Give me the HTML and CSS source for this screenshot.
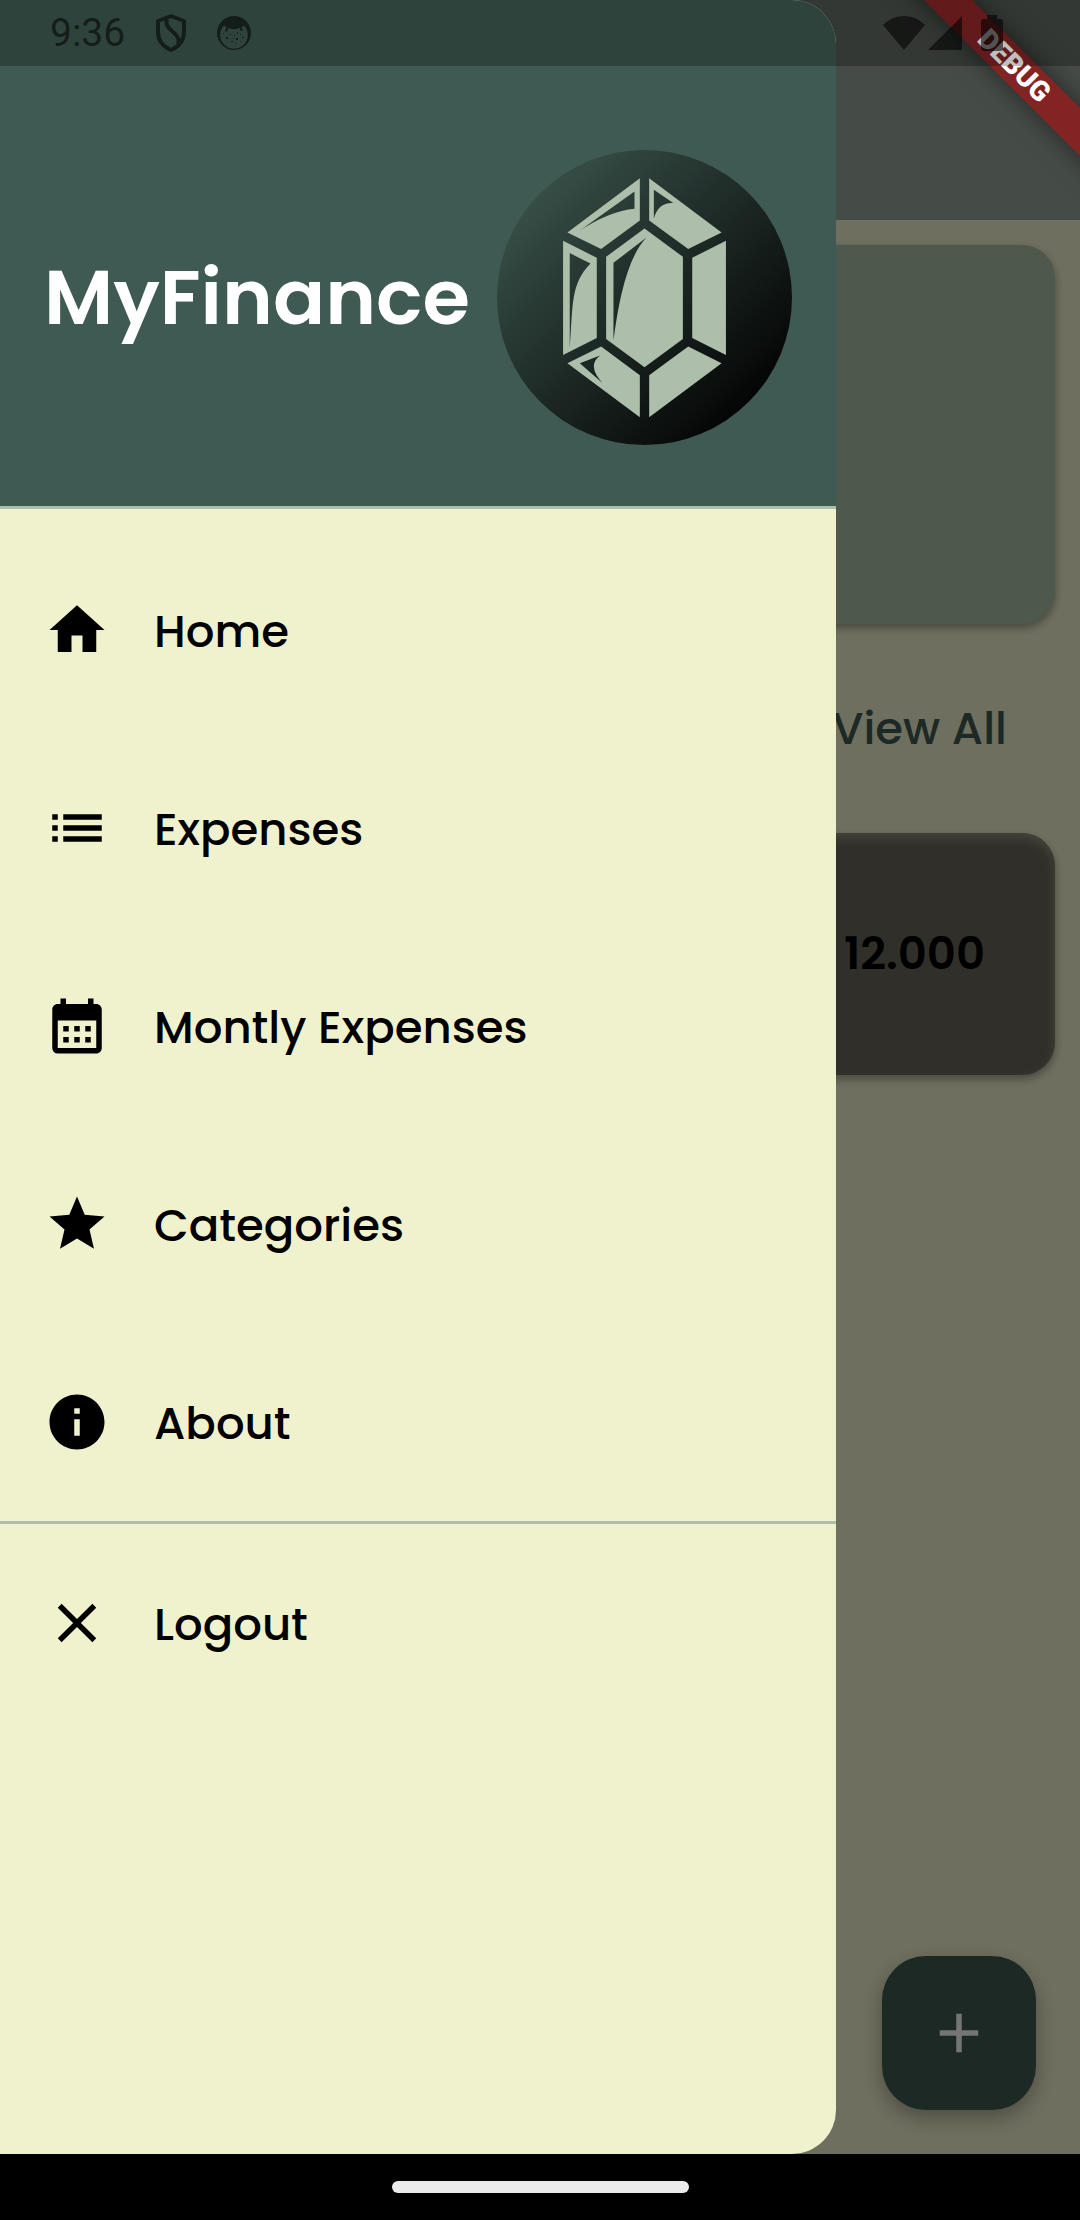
FILE: index.html
```html
<!DOCTYPE html>
<html lang="en">
<head>
<meta charset="utf-8">
<meta name="viewport" content="width=device-width, initial-scale=1">
<title>MyFinance</title>
<link rel="stylesheet" href="styles.css">
</head>
<body>
<div class="device">
  <div class="app">
    <div class="page">
      <header class="app-bar"></header>
      <main class="content">
        <section class="card card-summary"></section>
        <div class="section-head"><a class="view-all" href="#expenses">View All</a></div>
        <section class="card card-expense"><span class="amount">12.000</span></section>
      </main>
      <button class="fab" type="button" aria-label="Add expense">
        <svg class="icon" viewBox="0 0 24 24"><path d="M19 13h-6v6h-2v-6H5v-2h6V5h2v6h6z"/></svg>
      </button>
    </div>
    <div class="scrim"></div>

    <aside class="drawer">
      <header class="drawer-head">
        <h1 class="brand">MyFinance</h1>
        <svg class="logo" viewBox="52 58 884 884" aria-hidden="true">
          <defs>
            <linearGradient id="orb" x1="0.1" y1="0.1" x2="0.86" y2="0.86">
              <stop offset="0" stop-color="#3a534b"/>
              <stop offset="0.3" stop-color="#293a35"/>
              <stop offset="1" stop-color="#040505"/>
            </linearGradient>
          </defs>
          <circle cx="494" cy="500" r="442" fill="url(#orb)"/>
          <g fill="#adbfaa" fill-rule="evenodd">
            <path d="M480 143V269L364 355L263 305ZM464 182L296 302Q390 240 464 234Z"/>
            <path d="M508 143L725 305L625 355L508 269ZM522 177V263Q536 214 580 217Z"/>
            <path d="M250 330L351 381V621L250 672ZM270 367V652C280 520 272 460 332 398Z"/>
            <path d="M494 293L609 378V624L494 709L379 624V378ZM499 321L401 396V628C418 500 444 380 499 321Z"/>
            <path d="M738 330V672L637 621V381Z"/>
            <path d="M364 647L480 733V859L263 697ZM361 674L300 697L368 756Q320 704 361 674Z"/>
            <path d="M625 647L725 697L508 859V733Z"/>
          </g>
        </svg>
      </header>
      <nav class="menu" aria-label="Main">
        <a class="menu-item" href="#home">
          <svg class="icon" viewBox="0 0 24 24"><path d="M10 20v-6h4v6h5v-8h3L12 3 2 12h3v8z"/></svg>
          <span class="menu-label">Home</span>
        </a>
        <a class="menu-item" href="#expenses">
          <svg class="icon" viewBox="0 0 24 24"><path d="M3 13h2v-2H3v2zm0 4h2v-2H3v2zm0-8h2V7H3v2zm4 4h14v-2H7v2zm0 4h14v-2H7v2zM7 7v2h14V7H7z"/></svg>
          <span class="menu-label">Expenses</span>
        </a>
        <a class="menu-item" href="#monthly">
          <svg class="icon" viewBox="0 0 24 24"><path fill-rule="evenodd" d="M19 4h-1V2h-2v2H8V2H6v2H5c-1.110 0-1.990.9-1.990 2L3 20a2 2 0 0 0 2 2h14c1.100 0 2-.9 2-2V6c0-1.100-.9-2-2-2zm0 16H5V10h14v10zM9 14H7v-2h2v2zm4 0h-2v-2h2v2zm4 0h-2v-2h2v2zm-8 4H7v-2h2v2zm4 0h-2v-2h2v2zm4 0h-2v-2h2v2z"/></svg>
          <span class="menu-label">Montly Expenses</span>
        </a>
        <a class="menu-item" href="#categories">
          <svg class="icon" viewBox="0 0 24 24"><path d="M12 17.270L18.180 21l-1.640-7.030L22 9.240l-7.190-.61L12 2 9.190 8.630 2 9.240l5.460 4.730L5.820 21z"/></svg>
          <span class="menu-label">Categories</span>
        </a>
        <a class="menu-item" href="#about">
          <svg class="icon" viewBox="0 0 24 24"><path fill-rule="evenodd" d="M12 2C6.480 2 2 6.480 2 12s4.480 10 10 10 10-4.480 10-10S17.520 2 12 2zm1 15h-2v-6h2v6zm0-8h-2V7h2v2z"/></svg>
          <span class="menu-label">About</span>
        </a>
      </nav>
      <div class="menu-footer">
        <a class="menu-item" href="#logout">
          <svg class="icon" viewBox="0 0 24 24"><path d="M19 6.410L17.590 5 12 10.590 6.410 5 5 6.410 10.590 12 5 17.590 6.410 19 12 13.410 17.590 19 19 17.590 13.410 12z"/></svg>
          <span class="menu-label">Logout</span>
        </a>
      </div>
    </aside>

    <div class="banner-corner"><span class="banner">DEBUG</span></div>

    <div class="status-bar">
      <div class="status-left">
        <span>9:36</span>
        <svg class="shield" viewBox="0 0 30 38"><path fill="none" stroke="currentColor" stroke-width="4" stroke-linejoin="round" d="M15 2L28 7V18C28 27 22 33 15 36C8 33 2 27 2 18V7ZM11 5C7 17 26 18 22 30"/></svg>
        <svg class="cookie" viewBox="0 0 34 34">
          <path fill="currentColor" fill-rule="evenodd" d="M17 0a17 17 0 1 1 0 34a17 17 0 1 1 0-34zM7 9.500A13.800 13.800 0 1 0 27 9.500L24.500 11.500L26 15L24 15L22.500 12Q17 14.500 11.500 12L10 16L8 15L9.500 11.500Z"/>
          <path fill="currentColor" d="M6 17h1v1H6zM9 21h2v2H9zM13 18h1v1h-1zM17 19h1v1h-1zM20 16h1v2h-1zM19 22h2v2h-2zM23 18h1v1h-1zM25 21h2v1h-2zM14 25h2v1h-2zM18 27h1v1h-1zM16 22h1v1h-1zM23 25h1v1h-1z"/>
        </svg>
      </div>
      <div class="status-right">
        <svg class="wifi" viewBox="0 0 42 34"><path fill="currentColor" d="M21 34L0 9Q9 0 21 0T42 9Z"/></svg>
        <svg class="signal" viewBox="0 0 34 34"><path fill="currentColor" d="M34 0V34H0Z"/></svg>
        <svg class="battery" viewBox="0 0 22 36"><path fill="currentColor" d="M6 0h10v4h3a3 3 0 0 1 3 3v26a3 3 0 0 1-3 3H3a3 3 0 0 1-3-3V7a3 3 0 0 1 3-3h3z"/></svg>
      </div>
    </div>
  </div>
  <footer class="gesture-bar"><div class="gesture-pill"></div></footer>
</div>
</body>
</html>
```

FILE: styles.css
```css
:root {
  --cream: #f0f2ce;
  --forest: #3f5a52;
  --sage: #adbfaa;
}

* {
  box-sizing: border-box;
}

body {
  margin: 0;
  background: #000;
  color: #000;
  font: 500 45px/68px Poppins, Inter, "Noto Sans", sans-serif;
}

a {
  color: inherit;
  text-decoration: none;
}

svg {
  display: block;
  flex: none;
}

.device {
  display: flex;
  flex-direction: column;
  min-height: 100vh;
}

.app {
  position: relative;
  display: flex;
  flex: 1;
  overflow: hidden;
}

/* Home page behind the drawer */
.page {
  flex: 1;
  background: var(--cream);
}

.app-bar {
  height: 220px;
  background: #96a39a;
}

.content {
  padding: 25px;
}

.card {
  border-radius: 33px;
  box-shadow: 0 4px 8px rgba(0, 0, 0, 0.35);
}

.card-summary {
  min-height: 379px;
  background: #abbfa9;
}

.section-head {
  display: flex;
  justify-content: flex-end;
  align-items: center;
  height: 209px;
  padding-right: 48px;
}

.view-all {
  color: var(--forest);
}

.card-expense {
  display: flex;
  justify-content: flex-end;
  align-items: center;
  min-height: 242px;
  padding-right: 70px;
  background: #6a685b;
  box-shadow: 0 4px 8px rgba(0, 0, 0, 0.35), inset 0 5px 10px #96957e;
}

.amount {
  font-weight: 600;
}

.icon {
  width: 66px;
  height: 66px;
  fill: currentColor;
}

.fab {
  position: absolute;
  right: 44px;
  bottom: 44px;
  display: grid;
  place-items: center;
  width: 154px;
  height: 154px;
  padding: 0;
  border: 0;
  border-radius: 44px;
  background: var(--forest);
  color: #fff;
  box-shadow: 0 8px 20px rgba(0, 0, 0, 0.3);
}

.scrim {
  position: absolute;
  inset: 0;
  background: rgba(0, 0, 0, 0.54);
}

/* Navigation drawer */
.drawer {
  position: absolute;
  inset: 0 auto 0 0;
  width: 836px;
  max-width: 86%;
  overflow: hidden;
  border-radius: 0 44px 44px 0;
  background: var(--cream);
}

.drawer-head {
  display: flex;
  justify-content: space-between;
  align-items: center;
  height: 509px;
  padding: 110px 44px 22px;
  border-bottom: 3px solid var(--sage);
  background: var(--forest);
}

.brand {
  margin: 0;
  color: #fff;
  font-size: 77px;
  font-weight: 600;
  line-height: 116px;
}

.logo {
  width: 295px;
  height: 295px;
}

.menu {
  padding-top: 22px;
}

.menu-item {
  display: flex;
  align-items: center;
  gap: 44px;
  height: 198px;
  padding: 0 44px;
}

.menu-label {
  padding-top: 4px;
}

.menu-footer {
  border-top: 3px solid var(--sage);
}

/* Debug ribbon */
.banner-corner {
  position: absolute;
  top: 0;
  right: 0;
  width: 220px;
  height: 220px;
  overflow: hidden;
}

.banner {
  position: absolute;
  top: 49px;
  right: -100px;
  width: 332px;
  transform: rotate(45deg);
  background: #842323;
  color: #fff;
  font: 900 28px/34px Roboto, sans-serif;
  text-align: center;
  box-shadow: 0 0 24px rgba(0, 0, 0, 0.5);
}

/* System bars */
.status-bar {
  position: absolute;
  inset: 0 0 auto 0;
  display: flex;
  justify-content: space-between;
  align-items: center;
  height: 66px;
  padding: 0 77px 0 50px;
  background: rgba(0, 0, 0, 0.25);
  color: rgba(0, 0, 0, 0.57);
  font: 400 39px/66px Roboto, sans-serif;
}

.status-left {
  display: flex;
  align-items: center;
  gap: 31px;
}

.status-right {
  display: flex;
  align-items: center;
  gap: 3px;
}

.shield {
  width: 30px;
  height: 38px;
}

.cookie {
  width: 34px;
  height: 34px;
}

.wifi {
  width: 42px;
  height: 34px;
}

.signal {
  width: 34px;
  height: 34px;
}

.battery {
  width: 22px;
  height: 36px;
  margin-left: 16px;
}

.gesture-bar {
  display: grid;
  place-items: center;
  height: 66px;
  background: #000;
}

.gesture-pill {
  width: 297px;
  height: 12px;
  border-radius: 6px;
  background: #ebebeb;
}
```
